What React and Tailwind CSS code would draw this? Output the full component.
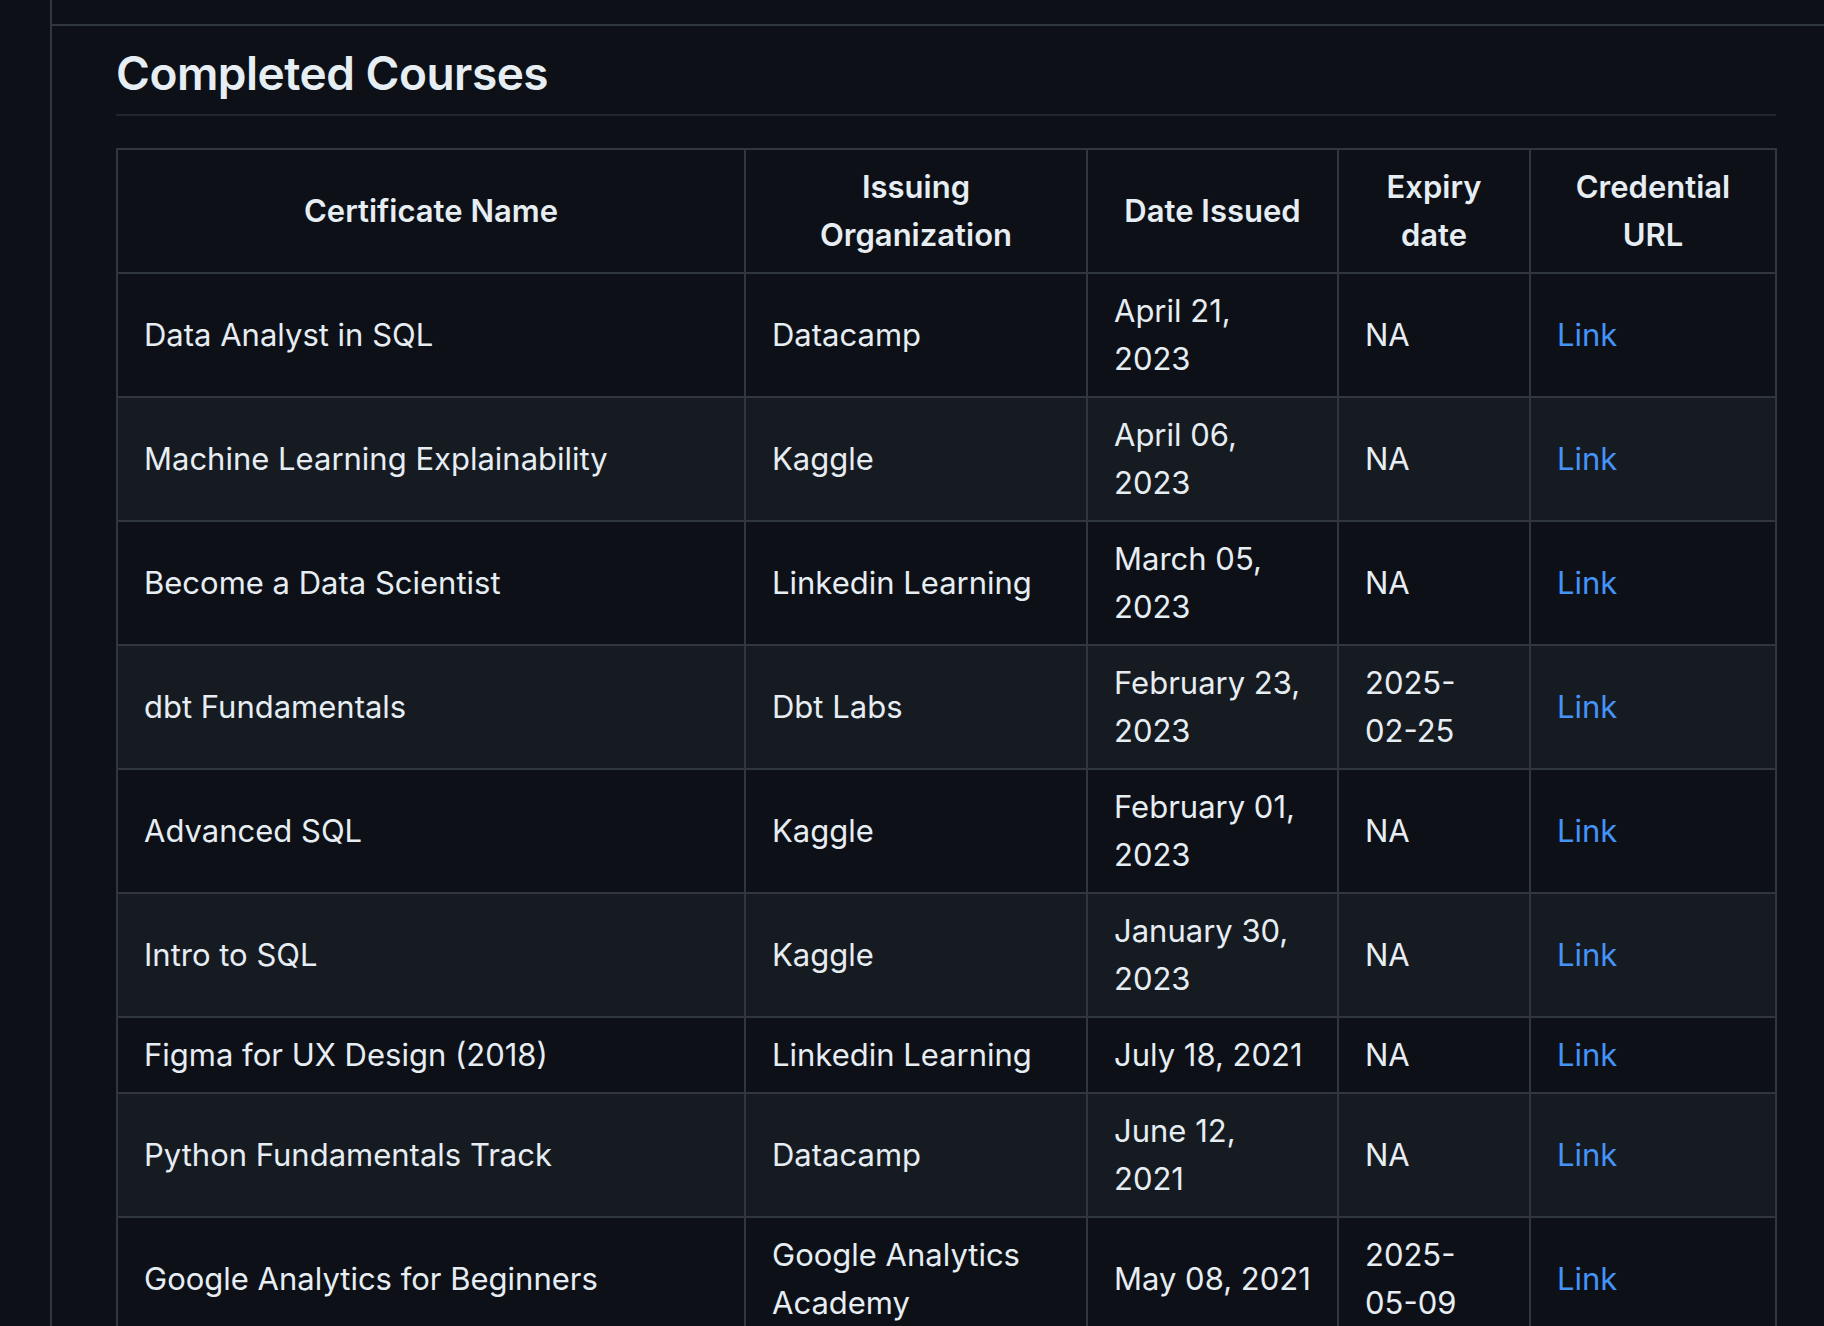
import React from "react";

const rows = [
  ["Data Analyst in SQL", "Datacamp", "April 21,\n2023", "NA"],
  ["Machine Learning Explainability", "Kaggle", "April 06,\n2023", "NA"],
  ["Become a Data Scientist", "Linkedin Learning", "March 05,\n2023", "NA"],
  ["dbt Fundamentals", "Dbt Labs", "February 23,\n2023", "2025-\n02-25"],
  ["Advanced SQL", "Kaggle", "February 01,\n2023", "NA"],
  ["Intro to SQL", "Kaggle", "January 30,\n2023", "NA"],
  ["Figma for UX Design (2018)", "Linkedin Learning", "July 18, 2021", "NA"],
  ["Python Fundamentals Track", "Datacamp", "June 12,\n2021", "NA"],
  ["Google Analytics for Beginners", "Google Analytics\nAcademy", "May 08, 2021", "2025-\n05-09"],
];

const cell = "border-2 border-[#30363d] px-[26px] py-[13px] whitespace-pre-line";

export default function App() {
  return (
    <div className="h-[1326px] overflow-hidden bg-[#0d1117] text-[#e6edf3] font-[Inter,Liberation_Sans,sans-serif]">
      <div className="ml-[50px] h-full border-l-2 border-[#30363d]">
        <div className="h-[26px] border-b-2 border-[#30363d]" />
        <div className="pl-[64px] pr-[48px]">
          <h2 className="mt-[18px] pb-[12px] border-b-2 border-[#21262d] text-[46px] leading-[58px] font-semibold tracking-[-0.5px]">
            Completed Courses
          </h2>
          <table className="mt-[32px] w-[1659px] table-fixed border-collapse text-[31px] leading-[48px]">
            <colgroup>
              <col className="w-[628px]" />
              <col className="w-[342px]" />
              <col className="w-[251px]" />
              <col className="w-[192px]" />
              <col className="w-[246px]" />
            </colgroup>
            <thead>
              <tr className="bg-[#0d1117]">
                {["Certificate Name", "Issuing\nOrganization", "Date Issued", "Expiry\ndate", "Credential\nURL"].map((h) => (
                  <th key={h} className={`${cell} font-semibold text-center`}>{h}</th>
                ))}
              </tr>
            </thead>
            <tbody>
              {rows.map((r, i) => (
                <tr key={i} className={i % 2 ? "bg-[#161b22]" : "bg-[#0d1117]"}>
                  {r.map((c, j) => (
                    <td key={j} className={cell}>{c}</td>
                  ))}
                  <td className={cell}>
                    <a className="text-[#4493f8]">Link</a>
                  </td>
                </tr>
              ))}
            </tbody>
          </table>
        </div>
      </div>
    </div>
  );
}
